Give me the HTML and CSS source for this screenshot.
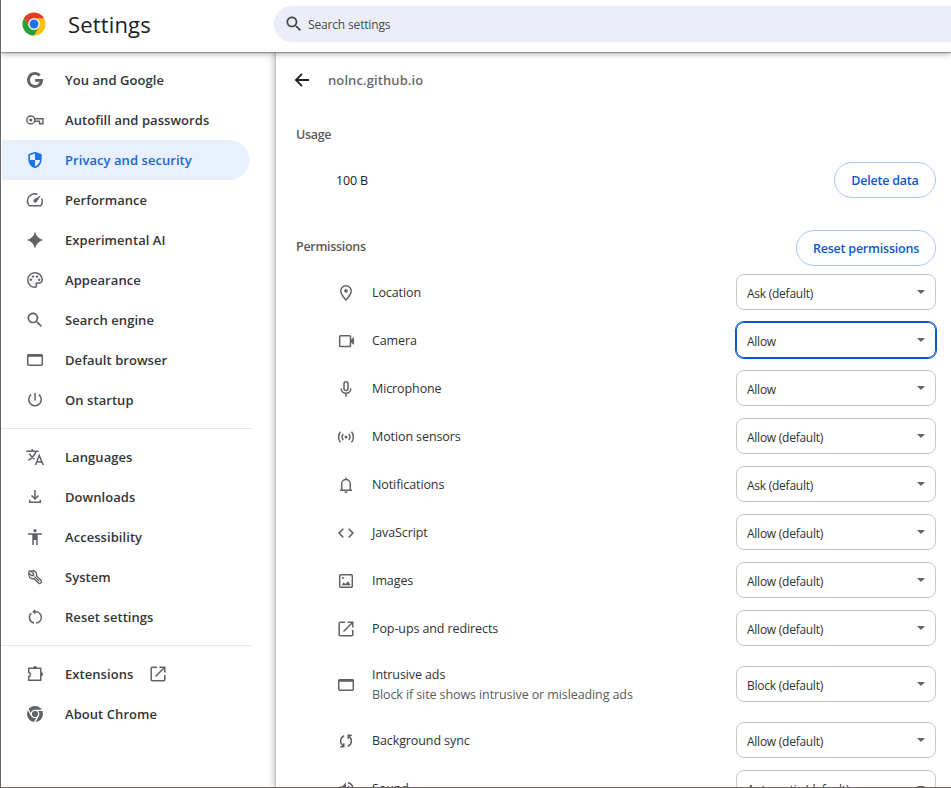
FILE: index.html
```html
<!DOCTYPE html>
<html lang="en">
<head>
<meta charset="utf-8">
<title>Settings</title>
<link rel="stylesheet" href="styles.css">
</head>
<body>
<svg class="defs" aria-hidden="true">
  <symbol id="search" viewBox="0 0 24 24"><path fill="currentColor" d="M15.5 14h-.79l-.28-.27C15.41 12.59 16 11.11 16 9.5 16 5.91 13.09 3 9.5 3S3 5.91 3 9.5 5.91 16 9.5 16c1.61 0 3.09-.59 4.23-1.57l.27.28v.79l5 4.99L20.49 19l-4.99-5zm-6 0C7.01 14 5 11.99 5 9.5S7.01 5 9.5 5 14 7.01 14 9.5 11.99 14 9.5 14z"/></symbol>
  <symbol id="window" viewBox="0 0 20 20"><rect x="2.75" y="4.75" width="14.5" height="10.5" rx="1"/><path d="M2.7 5.6h14.6" stroke-width="2.4"/></symbol>
  <symbol id="launch" viewBox="0 0 20 20"><path d="M9 3.2H4.2a1 1 0 0 0-1 1v11.6a1 1 0 0 0 1 1h11.6a1 1 0 0 0 1-1V11M11.5 3.2h5.3v5.3M16.5 3.5 7.5 12.5"/></symbol>
</svg>
<div class="app">
  <header class="bar">
    <div class="brand">
      <svg class="logo" viewBox="0 0 48 48"><circle cx="24" cy="24" r="23" fill="#fbc116"/><path fill="#e33b2e" d="M4.1 12.5a23 23 0 0 1 39.8 0H24a11.5 11.5 0 0 0-10 17.2z"/><path fill="#269f42" d="M4.1 12.5 14 29.8A11.5 11.5 0 0 0 34 29.8L24 47A23 23 0 0 1 4.1 12.5z"/><circle cx="24" cy="24" r="11.5" fill="#fff"/><circle cx="24" cy="24" r="9" fill="#1a73e8"/></svg>
      <h1>Settings</h1>
    </div>
    <div class="search"><svg><use href="#search"/></svg><span>Search settings</span></div>
  </header>
  <div class="body">
    <nav class="side">
      <a class="item"><svg viewBox="0 0 20 20"><path stroke-width="2.9" d="M14.8 5.4A6.6 6.6 0 1 0 16.6 10.4H10.2"/></svg><span>You and Google</span></a>
      <a class="item"><svg viewBox="0 0 20 20"><circle cx="5.8" cy="10" r="4"/><circle cx="5.8" cy="10" r="1.6" fill="currentColor" stroke="none"/><path d="M9.6 8.7h8.3v5h-3.4v-2.4H9.6"/></svg><span>Autofill and passwords</span></a>
      <a class="item selected"><svg viewBox="0 0 24 24"><path fill="currentColor" stroke="none" d="M12 2 4 5v6.1c0 5.05 3.4 9.8 8 10.9 4.600-1.100 8-5.850 8-10.900V5zM12 12h6c-.4 3.600-2.800 6.900-6 7.900V12H6V6.400l6-2.300z"/></svg><span>Privacy and security</span></a>
      <a class="item"><svg viewBox="0 0 20 20"><path d="M12.500 4.300A7.300 7.300 0 0 0 3.800 15.200a1 1 0 0 0 .8.500h10.800a1 1 0 0 0 .8-.5 7.300 7.300 0 0 0 .4-6.700"/><path fill="currentColor" stroke="none" d="M16 5.300 11.600 12a1.800 1.800 0 0 1-2.700-2.600z"/></svg><span>Performance</span></a>
      <a class="item"><svg viewBox="0 0 20 20"><path fill="currentColor" stroke="none" d="M10 1.500Q11.500 8.500 18.500 10 11.500 11.500 10 18.500 8.500 11.500 1.500 10 8.500 8.500 10 1.500z"/></svg><span>Experimental AI</span></a>
      <a class="item"><svg viewBox="0 0 20 20"><path d="M10 17.300A7.300 7.300 0 1 1 17.300 9.600c0 2.200-1.600 3.400-3.500 3.400h-1.500c-1.300 0-1.500 1-1 1.900.5 1 .3 2.400-1.300 2.400z"/><g fill="currentColor" stroke="none"><circle cx="5.800" cy="9.800" r="1.200"/><circle cx="8" cy="6.600" r="1.200"/><circle cx="12" cy="6.600" r="1.200"/><circle cx="14.200" cy="9.800" r="1.200"/></g></svg><span>Appearance</span></a>
      <a class="item"><svg><use href="#search"/></svg><span>Search engine</span></a>
      <a class="item"><svg><use href="#window"/></svg><span>Default browser</span></a>
      <a class="item"><svg viewBox="0 0 20 20"><path d="M10 3v7.500M6.100 4.600a6.300 6.300 0 1 0 7.800 0"/></svg><span>On startup</span></a>
      <hr>
      <a class="item"><svg viewBox="0 0 20 20"><path d="M1.200 4.200h12.500M7.200 2v2M3.300 13.500c4-2.800 6.700-5.300 7.700-9M4.300 6.500c1 2.300 3 4.200 5.200 5.500M10.500 18l3.800-9.500 3.900 9.500M11.700 14.900h5.200"/></svg><span>Languages</span></a>
      <a class="item"><svg viewBox="0 0 20 20"><path d="M10 3v9M6.500 8.500 10 12l3.500-3.500M4.700 12.800v2.500h10.600v-2.500"/></svg><span>Downloads</span></a>
      <a class="item"><svg viewBox="0 0 20 20"><g fill="currentColor" stroke="none"><circle cx="10" cy="3.700" r="1.600"/><path d="M3 6.200h14v1.500h-4.300V18h-1.500v-5H8.800v5H7.300V7.700H3z"/></g></svg><span>Accessibility</span></a>
      <a class="item"><svg viewBox="0 0 20 20"><path stroke-width="1.400" d="M11.600 8.900a4 4 0 0 0-5.500-4.800L8.500 6.500v2h-2L4.100 6.100a4 4 0 0 0 4.800 5.500l4.600 4.500a1.400 1.400 0 0 0 2 0l.6-.6a1.400 1.400 0 0 0 0-2z"/><path stroke-width="1.200" d="m9.500 9.500 4.800 4.800M4 6V4.200h2"/></svg><span>System</span></a>
      <a class="item"><svg viewBox="0 0 20 20"><path d="M9 16A5.600 5.600 0 0 1 6.300 6.300M11 16a5.600 5.600 0 0 0-.5-11.200H8.300"/><path fill="currentColor" stroke="none" d="M10.300 2v5.600L7.300 4.800z"/></svg><span>Reset settings</span></a>
      <hr>
      <a class="item"><svg viewBox="0 0 20 20"><path d="M3.700 4.200h12.100v12.100H3.700v-3.500c2.200-.4 2.600-3.800 0-4.600z" stroke-linejoin="round"/><path fill="currentColor" stroke="none" d="M8 4a2 2 0 0 1 4 0zM16 8.200a2 2 0 0 1 0 4z"/></svg><span>Extensions</span><svg class="ext"><use href="#launch"/></svg></a>
      <a class="item"><svg viewBox="0 0 20 20"><circle cx="10" cy="10" r="8" fill="currentColor" stroke="none"/><g stroke="#fff" stroke-width="1.300"><circle cx="10" cy="10" r="3.700"/><path d="M10 6.300h8M6.800 11.900 2.800 5M13.200 11.900 9.200 18.800"/></g></svg><span>About Chrome</span></a>
    </nav>
    <main class="main">
      <div class="title"><svg viewBox="0 0 20 20"><path d="M17 10H4.500M10 3.800 3.900 10l6.100 6.200"/></svg><h2>nolnc.github.io</h2></div>
      <h3 class="usage">Usage</h3>
      <div class="data"><span>100 B</span><button>Delete data</button></div>
      <div class="perm"><h3>Permissions</h3><button class="reset">Reset permissions</button></div>
      <div class="row"><svg viewBox="0 0 20 20"><path d="M10 17C7 13.600 4.800 10.900 4.800 7.900a5.200 5.200 0 0 1 10.400 0c0 3-2.200 5.700-5.200 9.100z"/><circle cx="10" cy="7.900" r="1.800" fill="currentColor" stroke="none"/></svg><span>Location</span><div class="select">Ask (default)</div></div>
      <div class="row"><svg viewBox="0 0 20 20"><rect x="3.700" y="4.700" width="10.800" height="10.800" rx=".8"/><path fill="currentColor" stroke="none" d="M14.500 9 18 6v8l-3.500-3z"/></svg><span>Camera</span><div class="select focus">Allow</div></div>
      <div class="row"><svg viewBox="0 0 20 20"><rect x="8" y="2.800" width="4" height="8.800" rx="2"/><path d="M5.200 9.500a4.800 4.800 0 0 0 9.600 0M10 14.500v3.200"/></svg><span>Microphone</span><div class="select">Allow</div></div>
      <div class="row"><svg viewBox="0 0 20 20"><circle cx="10" cy="10" r="1.500" fill="currentColor" stroke="none"/><path d="M7.400 7a4 4 0 0 0 0 6M12.600 7a4 4 0 0 1 0 6M4.500 4.800a8 8 0 0 0 0 10.400M15.500 4.800a8 8 0 0 1 0 10.400"/></svg><span>Motion sensors</span><div class="select">Allow (default)</div></div>
      <div class="row"><svg viewBox="0 0 20 20"><path d="M4 15.200h12M5.700 15V8.800a4.300 4.300 0 0 1 8.600 0V15M10 2.400v2"/><path fill="currentColor" stroke="none" d="M8.300 16.500h3.400a1.700 1.700 0 0 1-3.400 0z"/></svg><span>Notifications</span><div class="select">Ask (default)</div></div>
      <div class="row"><svg viewBox="0 0 20 20"><path d="M7.300 5.800 3 10.100l4.300 4.300M12.700 5.800 17 10.100l-4.300 4.300"/></svg><span>JavaScript</span><div class="select">Allow (default)</div></div>
      <div class="row"><svg viewBox="0 0 20 20"><rect x="3.700" y="3.700" width="12.600" height="12.600" rx="1"/><path fill="currentColor" stroke="none" d="m5.500 14.200 2.200-3 1.700 1.800L12 10l2.700 4.200zM6 6.200h2v1.600H6z"/></svg><span>Images</span><div class="select">Allow (default)</div></div>
      <div class="row"><svg><use href="#launch"/></svg><span>Pop-ups and redirects</span><div class="select">Allow (default)</div></div>
      <div class="row tall"><svg><use href="#window"/></svg><div class="two"><span>Intrusive ads</span><span class="sub">Block if site shows intrusive or misleading ads</span></div><div class="select">Block (default)</div></div>
      <div class="row"><svg viewBox="0 0 20 20"><path d="M8.200 4.700C4 6.500 3.400 12 7 14.800M11.800 15.300C16 13.500 16.600 8 13 5.200M4.200 15.700h3.600v-3.500M15.800 4.300h-3.600v3.500"/></svg><span>Background sync</span><div class="select">Allow (default)</div></div>
      <div class="row"><svg viewBox="0 0 20 20"><path fill="currentColor" stroke="none" d="M3 7.500h3L10 3.500v13l-4-4H3z"/><path d="M12 3.700a6.500 6.500 0 0 1 0 12.600M12 7.300a3 3 0 0 1 0 5.400"/></svg><span>Sound</span><div class="select">Automatic (default)</div></div>
    </main>
  </div>
</div>
</body>
</html>
```

FILE: styles.css
```css
* { box-sizing: border-box; }
body { margin: 0; font: 13px/20px "Open Sans", "Noto Sans", sans-serif; color: #202124; background: #fff; }
.defs { display: none; }
h1, h2, h3 { margin: 0; font-weight: 600; }
svg { width: 20px; height: 20px; flex: none; fill: none; stroke: currentColor; stroke-width: 1.5; }
#search path { stroke: none; }

.app { height: 788px; overflow: hidden; display: flex; flex-direction: column; border-left: 1px solid #6b6564; border-bottom: 1px solid #6b6564; }
.bar { height: 52px; flex: none; display: flex; position: relative; z-index: 2; background: #fff; box-shadow: 0 1px 1px rgba(0,0,0,.28), 0 2px 6px rgba(0,0,0,.3); }
.brand { width: 273px; display: flex; align-items: center; padding: 0 0 4px 21px; gap: 22px; }
.logo { width: 24px; height: 24px; stroke: none; }
h1 { font-size: 22px; font-weight: 500; line-height: 30px; letter-spacing: .15px; }
.search { flex: 1; height: 36px; margin-top: 6px; border-radius: 18px 0 0 18px; background: #ebeef8; display: flex; align-items: center; gap: 4px; padding-left: 10px; font-size: 12px; font-weight: 500; letter-spacing: -.16px; color: #474747; }
.search span { padding-top: 2px; }

.body { flex: 1; min-height: 0; display: flex; }
.side { width: 274px; flex: none; padding-top: 8px; }
.item { height: 40px; width: 248px; display: flex; align-items: center; padding-left: 24px; gap: 20px; font-weight: 600; color: #333538; letter-spacing: .06px; }
.item svg { color: #5f6368; }
.item .ext { margin-left: -5px; }
.item.selected { width: 247px; margin-left: 1px; padding-left: 23px; background: #e8f0fe; color: #1967d2; border-radius: 0 20px 20px 0; }
.selected svg { color: #1a73e8; }
hr { width: 250px; height: 1px; margin: 8px 0; border: 0; background: #e4e5e7; }

.main { flex: 1; min-width: 0; padding: 8px 15px 0 20px; border-left: 1px solid #c4c4c4; box-shadow: -2px 0 6px rgba(0,0,0,.22); overflow: hidden; }
.title { height: 40px; display: flex; align-items: center; gap: 16px; margin-left: -4px; color: #202124; }
h2 { font-size: 13px; color: #6a6a6a; letter-spacing: .1px; }
.title svg { stroke-width: 1.8; }
h3 { font-size: 12.5px; color: #5a5a5a; letter-spacing: -.3px; }
.usage { margin-top: 25px; }
.data { height: 36px; margin-top: 17px; padding-left: 40px; display: flex; align-items: center; justify-content: space-between; font-size: 12.5px; letter-spacing: -.15px; }
.data span { padding-top: 2px; }
button { width: 102px; height: 36px; padding: 2px 0 0; border: 1px solid #a8c7fa; border-radius: 18px; background: #fff; color: #0b57d0; font: 600 12.5px/20px "Open Sans", sans-serif; letter-spacing: -.22px; white-space: nowrap; }
.reset { width: 140px; }
.perm { height: 36px; margin-top: 32px; display: flex; justify-content: space-between; align-items: center; }
.perm h3 { margin-top: -2px; }
.perm + .row { margin-top: 2px; }
.row { height: 48px; padding-left: 40px; display: flex; align-items: center; gap: 16px; font-size: 12.5px; letter-spacing: -.1px; color: #303134; }
.row svg { color: #5f6368; margin-top: 2px; }
.row > span, .two { padding-top: 2px; }
.two { display: flex; flex-direction: column; }
.row.tall { height: 64px; }
.sub { color: #5a5a5a; }
.select { margin-left: auto; width: 200px; height: 36px; border: 1px solid #c7c7c7; border-radius: 8px; padding: 4px 10px 0; font-size: 12px; letter-spacing: -.25px; display: flex; align-items: center; justify-content: space-between; color: #303134; }
.select::after { content: ""; border: 4px solid transparent; border-top-color: #5f6368; border-bottom: 0; margin-top: -4px; }
.select.focus { border-color: #0b57d0; outline: 1px solid #0b57d0; }
```
